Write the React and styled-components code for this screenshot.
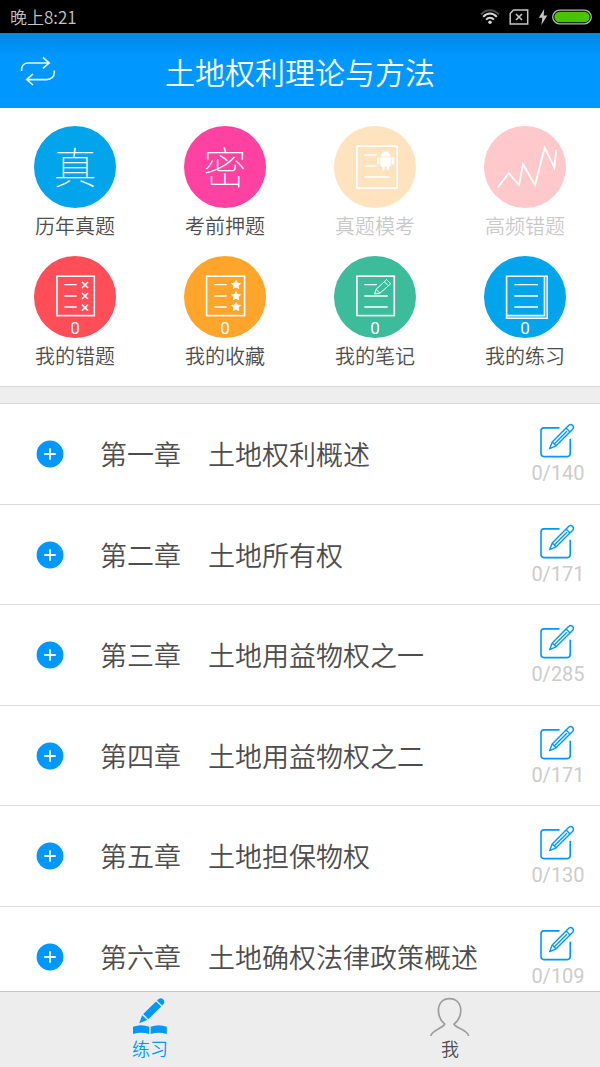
import React, { useState } from "react";
import styled, { createGlobalStyle } from "styled-components";

const GlobalStyle = createGlobalStyle`
  * {
    box-sizing: border-box;
  }

  body {
    margin: 0;
    font-family: "Noto Sans CJK SC", sans-serif;
    font-weight: 350;
    color: #4d4d4d;
    background: #ffffff;
  }

  button {
    padding: 0;
    border: none;
    background: none;
    font-family: inherit;
    font-weight: inherit;
    color: inherit;
    cursor: pointer;
  }
`;

const Screen = styled.div`
  display: flex;
  flex-direction: column;
  height: 100vh;
`;

const StatusBar = styled.div`
  display: flex;
  align-items: center;
  justify-content: space-between;
  flex: none;
  height: 33px;
  padding: 0 8px 0 10px;
  background: #000000;
  color: #c4c4c4;
  font-size: 17px;
  line-height: 24px;
`;

const StatusIcons = styled.div`
  display: flex;
  align-items: center;
  gap: 9px;
`;

const Power = styled.div`
  display: flex;
  align-items: center;
  gap: 4px;
`;

const Header = styled.header`
  display: grid;
  grid-template-columns: 60px 1fr 60px;
  align-items: center;
  flex: none;
  height: 75px;
  background: linear-gradient(#0088e6 0px, #0098ff 24px);
  color: #ffffff;
`;

const SwitchButton = styled.button`
  display: flex;
  padding-left: 20px;
`;

const Title = styled.h1`
  margin: 0;
  text-align: center;
  font-weight: 350;
  font-size: 30px;
  line-height: 44px;
`;

const Menu = styled.nav`
  display: grid;
  grid-template-columns: repeat(4, 1fr);
  row-gap: 16px;
  flex: none;
  padding: 18px 0 16px;
`;

const MenuItem = styled.button`
  display: flex;
  flex-direction: column;
  align-items: center;
  gap: 4px;
  font-size: 20px;
  line-height: 28px;
  opacity: ${({ $faded }) => ($faded ? 0.3 : 1)};
`;

const Circle = styled.span`
  display: grid;
  place-items: center;
  width: 82px;
  height: 82px;
  border-radius: 50%;
  background: ${({ $color }) => $color};
  color: #ffffff;

  > * {
    grid-area: 1 / 1;
  }
`;

const Character = styled.span`
  padding-bottom: 4px;
  font-weight: 100;
  font-size: 43px;
  line-height: 44px;
`;

const Badge = styled.span`
  align-self: end;
  font-family: Roboto, sans-serif;
  font-weight: 400;
  font-size: 17px;
  line-height: 20px;
`;

const Divider = styled.div`
  flex: none;
  height: 18px;
  border-top: 1px solid #d9d9d9;
  border-bottom: 1px solid #d9d9d9;
  background: #eeeeee;
`;

const ChapterList = styled.ul`
  flex: 1;
  min-height: 0;
  margin: 0;
  padding: 0;
  list-style: none;
  overflow-y: auto;
  scrollbar-width: none;
`;

const Chapter = styled.li`
  display: flex;
  align-items: center;
  height: 101px;
  border-bottom: 1px solid #dcdcdc;

  &:nth-child(even) {
    height: 100px;
  }
`;

const ExpandButton = styled.button`
  display: flex;
  justify-content: center;
  flex: none;
  width: 100px;
`;

const ChapterName = styled.span`
  flex: 1;
  font-size: 27px;
  line-height: 40px;
  white-space: nowrap;
`;

const Progress = styled.button`
  display: flex;
  flex-direction: column;
  align-items: center;
  flex: none;
  gap: 2px;
  width: 84px;
  color: #cccccc;
  font-family: Roboto, sans-serif;
  font-weight: 400;
  font-size: 20px;
  line-height: 26px;
`;

const TabBar = styled.nav`
  display: flex;
  flex: none;
  height: 76px;
  border-top: 1px solid #c4c4c4;
  background: #ededed;
`;

const Tab = styled.button`
  display: flex;
  flex: 1;
  flex-direction: column;
  align-items: center;
  padding-top: 5px;
  color: ${({ $active }) => ($active ? "#0098ff" : "#4d4d4d")};
  font-size: 18px;
  line-height: 24px;
`;

const WifiIcon = () => (
  <svg width="20" height="16" viewBox="0 0 20 16" fill="none" strokeWidth="2">
    <path d="M1 5.5C6-.3 14-.3 19 5.5" stroke="#4a4a4a" />
    <path d="M3.2 7.9C7.2 3.4 12.8 3.4 16.8 7.9" stroke="#d8d8d8" />
    <path d="M6.1 10.7C8.4 8 11.6 8 13.9 10.7" stroke="#d8d8d8" />
    <circle cx="10" cy="13.3" r="1.7" fill="#d8d8d8" />
  </svg>
);

const SimIcon = () => (
  <svg width="20" height="16" viewBox="0 0 20 16" fill="none" stroke="#c4c4c4">
    <path d="M4.5 1H18.7V15H1.2V4.5Z" strokeWidth="1.5" />
    <path d="M7 5L13 11M13 5L7 11" strokeWidth="1.6" />
  </svg>
);

const BoltIcon = () => (
  <svg width="10" height="16" viewBox="0 0 10 16" fill="#c4c4c4">
    <path d="M6.2 0L.8 8.7H4.3L3.4 16L9.3 6.6H5.7Z" />
  </svg>
);

const BatteryIcon = () => (
  <svg width="40" height="16" viewBox="0 0 40 16">
    <rect x=".7" y="1.2" width="38.6" height="13.6" rx="6.8" fill="#000" stroke="#b5b5b5" strokeWidth="1.3" />
    <rect x="2.3" y="2.8" width="35.4" height="10.4" rx="5.2" fill="#48c400" />
  </svg>
);

const SwitchIcon = () => (
  <svg width="36" height="30" viewBox="0 0 36 30" fill="none" stroke="#fff" strokeWidth="1.6" strokeOpacity=".9">
    <path d="M1.6 15V13.5C1.6 9.5 4.3 7 8.3 7H29M22.9 1.4L29.2 7L22.9 12.4" />
    <path d="M34.3 14.6V16.5C34.3 20.8 31 23.6 26.7 23.6H6.9M13 18L6.7 23.6L13 29" />
  </svg>
);

const MenuSvg = ({ children }) => (
  <svg width="82" height="82" viewBox="0 0 82 82" fill="none" stroke="currentColor" strokeWidth="1.6">
    {children}
  </svg>
);

const ExamIcon = () => (
  <MenuSvg>
    <rect x="22.9" y="20.2" width="40.2" height="42" rx="1" strokeWidth="1.8" />
    <path d="M30.3 29H42.7M30.3 40H42.7M30.3 51H55.3" />
    <g fill="currentColor" stroke="none">
      <path d="M46.6 30.6C46.7 28.5 47.7 27 49.2 26.2L48.3 24.8L48.7 24.5L49.8 25.9A6 6 0 0 1 53.4 25.9L54.5 24.5L54.9 24.8L54 26.2C55.5 27 56.5 28.5 56.6 30.6Z" />
      <path d="M46.4 31.3H56.8V39.5Q56.8 40.5 55.8 40.5H55V43.6A1.1 1.1 0 0 1 52.8 43.6V40.5H50.5V43.6A1.1 1.1 0 0 1 48.3 43.6V40.5H47.4Q46.4 40.5 46.4 39.5Z" />
      <rect x="43" y="31" width="2.5" height="7.4" rx="1.2" />
      <rect x="57.6" y="31" width="2.5" height="7.4" rx="1.2" />
    </g>
  </MenuSvg>
);

const ChartIcon = () => (
  <MenuSvg>
    <path d="M7.7 47H75" strokeWidth=".6" strokeDasharray="1.5 2" strokeOpacity=".4" />
    <path d="M13.7 61.7L24.7 47.2L35 59L39 38.3L51 59L60.7 21.7L70.3 41.5L72.3 23.7" strokeWidth="1.9" />
  </MenuSvg>
);

const MistakesIcon = () => (
  <MenuSvg>
    <rect x="22.9" y="20.2" width="37.4" height="39.4" />
    <path d="M30.3 28.7H42.7M30.3 40H42.7M30.3 51H42.7" strokeWidth="1.3" />
    {[29, 40, 51.6].map((y) => (
      <path key={y} d={`M48 ${y - 3}L54 ${y + 3}M54 ${y - 3}L48 ${y + 3}`} />
    ))}
  </MenuSvg>
);

const FavoritesIcon = () => (
  <MenuSvg>
    <rect x="22.6" y="20.2" width="38" height="39.4" />
    <path d="M30.3 28.7H42.7M30.3 40H42.7M30.3 51H42.7" strokeWidth="1.3" />
    {[28.7, 39.9, 50.6].map((y) => (
      <path
        key={y}
        transform={`translate(52 ${y})`}
        d="M0-5.2L1.6-1.9L5.2-1.5L2.6 1L3.3 4.6L0 2.9L-3.3 4.6L-2.6 1L-5.2-1.5L-1.6-1.9Z"
        fill="currentColor"
        stroke="none"
      />
    ))}
  </MenuSvg>
);

const NotesIcon = () => (
  <MenuSvg>
    <rect x="22.9" y="20.2" width="37.4" height="39.4" />
    <path d="M30.3 28.7H43M30.3 40H53.7M30.3 51H53.7" strokeWidth="1.3" />
    <path d="M40.6 38L42 33.4L52.6 23.6L56.7 27.8L45.9 37.2ZM42 33.4L45.9 37.2M50.3 25.7L54.4 29.8" strokeWidth="1" />
  </MenuSvg>
);

const PracticeIcon = () => (
  <MenuSvg>
    <path d="M22.6 20.2H63.2V62.2H22.6ZM60.5 20.2V59.6H22.6" />
    <path d="M30.3 28.7H54M30.3 40H54M30.3 51H54" strokeWidth="1.3" />
  </MenuSvg>
);

const PlusIcon = () => (
  <svg width="28" height="28" viewBox="0 0 28 28">
    <circle cx="14" cy="14" r="13.4" fill="#0098ff" />
    <path d="M8.3 14H19.7M14 8.3V19.7" stroke="#fff" strokeWidth="1.8" />
  </svg>
);

const EditIcon = () => (
  <svg width="36" height="36" viewBox="1 -1 36 36" fill="none" stroke="#0098ff" strokeWidth="1.6" strokeLinejoin="round">
    <path d="M20.5 4.9H5Q2 4.9 2 7.9V30.6Q2 33.6 5 33.6H28.2Q31.2 33.6 31.2 30.6V15.7" />
    <path d="M10.7 25.6L13.2 18.9L29.8 2.3C32.6.2 35.8 3.5 33.7 6.2L17.1 22.8ZM13.2 18.9L17.1 22.8M27.1 5L31 8.9M15.4 20.8L27.9 8.3" strokeWidth="1.4" />
  </svg>
);

const StudyIcon = () => (
  <svg width="36" height="39" viewBox="0 0 36 39" fill="#0098ff">
    <path d="M7.2 26.2L10.2 18.2L15.3 23.1ZM11.2 17.1L24 4.4L29.2 9.5L16.4 22.2ZM25 3.4L26.7 1.9C28.3.7 30 1.1 31.3 2.5C32.7 3.8 32.7 5.6 31.6 6.9L30.1 8.5Z" />
    <path d="M1 29.8Q9 26.8 17.2 29.8V37.1Q9 34.2 1 37.1ZM18.7 29.8Q26.7 26.8 34.8 29.8V37.1Q26.7 34.2 18.7 37.1Z" />
  </svg>
);

const ProfileIcon = () => (
  <svg width="40" height="39" viewBox="1 0 40 39" fill="none" stroke="#9e9e9e" strokeWidth="1.7">
    <path d="M1.9 39C1.9 33.5 12.5 32 15.7 27.2C12 24 9.4 19 9.4 13.5C9.4 6 14 1.6 20.5 1.6S31.8 6 31.8 13.5C31.8 19 29 24 25 27.2C28.5 32 39.5 33.5 39.5 39" />
  </svg>
);

const menuItems = [
  { label: "历年真题", color: "#02a5ec", character: "真" },
  { label: "考前押题", color: "#ff42a1", character: "密" },
  { label: "真题模考", color: "#ffa52b", Icon: ExamIcon, faded: true },
  { label: "高频错题", color: "#ff4e58", Icon: ChartIcon, faded: true },
  { label: "我的错题", color: "#ff4e58", Icon: MistakesIcon, count: 0 },
  { label: "我的收藏", color: "#ffa52b", Icon: FavoritesIcon, count: 0 },
  { label: "我的笔记", color: "#3cbc9b", Icon: NotesIcon, count: 0 },
  { label: "我的练习", color: "#02a5ec", Icon: PracticeIcon, count: 0 },
];

const chapters = [
  { name: "第一章　土地权利概述", total: 140 },
  { name: "第二章　土地所有权", total: 171 },
  { name: "第三章　土地用益物权之一", total: 285 },
  { name: "第四章　土地用益物权之二", total: 171 },
  { name: "第五章　土地担保物权", total: 130 },
  { name: "第六章　土地确权法律政策概述", total: 109 },
];

const tabs = [
  { label: "练习", Icon: StudyIcon },
  { label: "我", Icon: ProfileIcon },
];

const App = () => {
  const [activeTab, setActiveTab] = useState("练习");

  return (
    <Screen>
      <GlobalStyle />
      <StatusBar>
        <span>晚上8:21</span>
        <StatusIcons>
          <WifiIcon />
          <SimIcon />
          <Power>
            <BoltIcon />
            <BatteryIcon />
          </Power>
        </StatusIcons>
      </StatusBar>
      <Header>
        <SwitchButton type="button" aria-label="切换">
          <SwitchIcon />
        </SwitchButton>
        <Title>土地权利理论与方法</Title>
      </Header>
      <Menu>
        {menuItems.map(({ label, color, character, Icon, count, faded }) => (
          <MenuItem key={label} type="button" $faded={faded}>
            <Circle $color={color}>
              {character && <Character>{character}</Character>}
              {Icon && <Icon />}
              {count !== undefined && <Badge>{count}</Badge>}
            </Circle>
            {label}
          </MenuItem>
        ))}
      </Menu>
      <Divider />
      <ChapterList>
        {chapters.map(({ name, total }) => (
          <Chapter key={name}>
            <ExpandButton type="button" aria-label="展开">
              <PlusIcon />
            </ExpandButton>
            <ChapterName>{name}</ChapterName>
            <Progress type="button">
              <EditIcon />
              0/{total}
            </Progress>
          </Chapter>
        ))}
      </ChapterList>
      <TabBar>
        {tabs.map(({ label, Icon }) => (
          <Tab
            key={label}
            type="button"
            $active={activeTab === label}
            onClick={() => setActiveTab(label)}
          >
            <Icon />
            {label}
          </Tab>
        ))}
      </TabBar>
    </Screen>
  );
};

export default App;
